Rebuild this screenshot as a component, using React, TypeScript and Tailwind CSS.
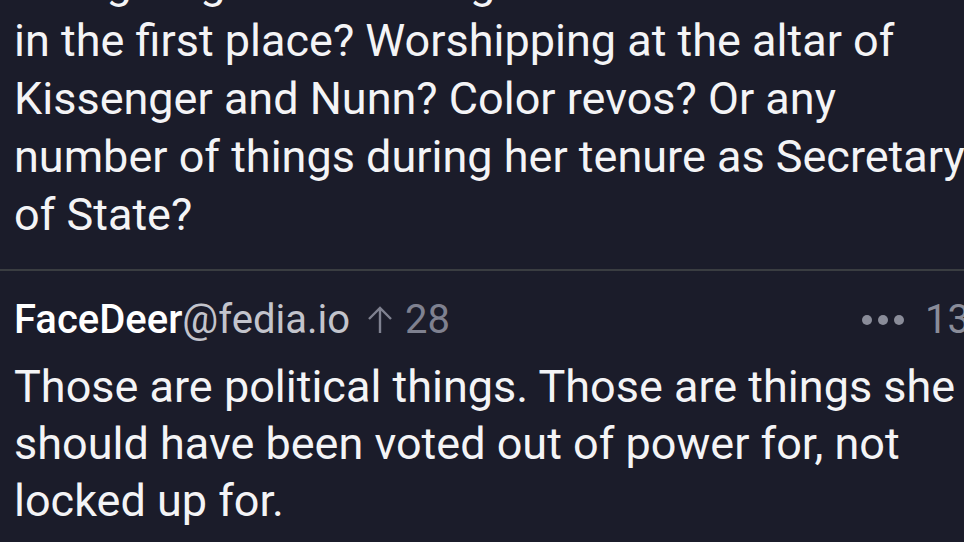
import React from 'react';

const App: React.FC = () => {
  return (
    <div
      className="w-[964px] h-[542px] overflow-hidden bg-[#1b1c2a] text-[#f4f4f6]"
      style={{ fontFamily: 'Roboto, "Noto Sans", sans-serif' }}
    >
      {/* parent comment, scrolled so its first line is cut */}
      <div className="-mt-[46px] pl-[14px] pb-[25px] text-[45px] leading-[58px] whitespace-nowrap">
        <p>Like giving us the sitting POTUS as a candidate</p>
        <p>in the first place? Worshipping at the altar of</p>
        <p>Kissenger and Nunn? Color revos? Or any</p>
        <p>number of things during her tenure as Secretary</p>
        <p>of State?</p>
      </div>

      <div className="h-[2px] bg-[#3a3d41]" />

      {/* reply */}
      <div className="pl-[14px] pt-[25px]">
        <div className="flex items-center text-[40px] leading-[48px] whitespace-nowrap">
          <span className="font-medium text-white">FaceDeer</span>
          <span className="text-[#c3c4cc]">@fedia.io</span>
          <span className="ml-[17px] flex items-center gap-[12px] text-[#7f8190]">
            <svg width="26" height="30" viewBox="0 0 26 30" fill="none" stroke="currentColor" strokeWidth="2.4">
              <path d="M13 28V3M2 14L13 3l11 11" />
            </svg>
            28
          </span>
          <span className="ml-auto flex items-center gap-[6px]">
            <span className="w-[10px] h-[10px] rounded-full bg-[#8a8c99]" />
            <span className="w-[10px] h-[10px] rounded-full bg-[#8a8c99]" />
            <span className="w-[10px] h-[10px] rounded-full bg-[#8a8c99]" />
          </span>
          <span className="ml-[21px] -mr-[28px] text-[#8a8c99]">13h</span>
        </div>
        <div className="mt-[14px] text-[45px] leading-[57px] whitespace-nowrap">
          <p>Those are political things. Those are things she</p>
          <p>should have been voted out of power for, not</p>
          <p>locked up for.</p>
        </div>
      </div>
    </div>
  );
};

export default App;
